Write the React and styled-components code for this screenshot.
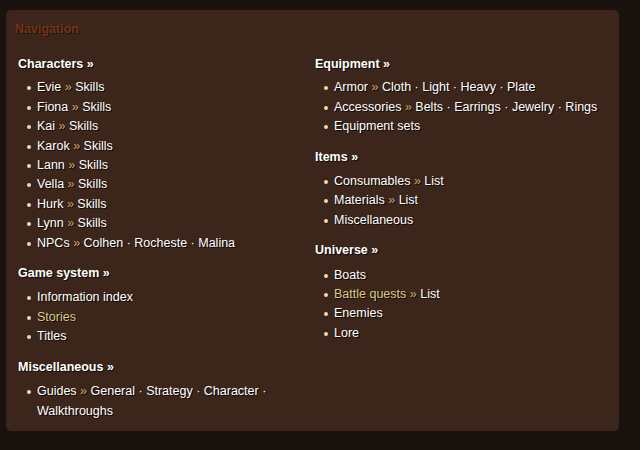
import React from 'react'
import styled, { createGlobalStyle } from 'styled-components'

const Global = createGlobalStyle`
  html, body {
    margin: 0;
    padding: 0;
    background: #1a120e;
    font-family: "Liberation Sans", Arial, sans-serif;
  }
`

const Page = styled.div`
  width: 640px;
  height: 450px;
  padding: 10px 0 0 6px;
  box-sizing: border-box;
`

const Panel = styled.div`
  width: 613px;
  box-sizing: border-box;
  background: #3c251a;
  border-radius: 5px;
  padding: 10px 8px 10px 12px;
`

const Title = styled.div`
  font-size: 12.5px;
  font-weight: bold;
  line-height: 19px;
  color: #74331a;
  text-shadow: 1px 1px 0 #1e120c;
  margin-left: -3px;
  margin-bottom: 16px;
`

const Columns = styled.div`
  display: grid;
  grid-template-columns: 297px 1fr;
`

const Column = styled.div``

const Heading = styled.div`
  font-size: 12.5px;
  font-weight: bold;
  line-height: 19.4px;
  color: #fff;
  text-shadow: 1px 1px 0 #120a06;
  margin-top: ${p => (p.$first ? '0' : '11px')};
  margin-bottom: ${p => (p.$first ? '4px' : '5px')};
`

const List = styled.ul`
  list-style: none;
  margin: 0;
  padding: 0 0 0 19px;
`

const Item = styled.li`
  position: relative;
  font-size: 12.5px;
  line-height: 19.4px;
  color: #fff;
  text-shadow: 1px 1px 0 #120a06;
  &::before {
    content: '';
    position: absolute;
    left: -10px;
    top: 8px;
    width: 4px;
    height: 4px;
    border-radius: 50%;
    background: #ecdcae;
  }
`

const Raquo = styled.span`
  color: ${p => (p.$white ? '#fff' : '#c9ac6c')};
`

const Link = styled.span`
  color: ${p => (p.$gold ? '#d6cb8a' : '#fff')};
`

const Sep = () => <span> · </span>

const Line = ({ main, gold, subs }) => (
  <Item>
    <Link $gold={gold}>{main}</Link>
    {subs && (
      <>
        {' '}
        <Raquo>»</Raquo>{' '}
        {subs.map((s, i) => (
          <React.Fragment key={i}>
            {i > 0 && <Sep />}
            <Link>{s}</Link>
          </React.Fragment>
        ))}
      </>
    )}
  </Item>
)

const Head = ({ children, first }) => (
  <Heading $first={first}>
    {children} <Raquo $white>»</Raquo>
  </Heading>
)

export default function App() {
  return (
    <>
      <Global />
      <Page>
        <Panel>
          <Title>Navigation</Title>
          <Columns>
            <Column>
              <Head first>Characters</Head>
              <List>
                <Line main="Evie" subs={['Skills']} />
                <Line main="Fiona" subs={['Skills']} />
                <Line main="Kai" subs={['Skills']} />
                <Line main="Karok" subs={['Skills']} />
                <Line main="Lann" subs={['Skills']} />
                <Line main="Vella" subs={['Skills']} />
                <Line main="Hurk" subs={['Skills']} />
                <Line main="Lynn" subs={['Skills']} />
                <Line main="NPCs" subs={['Colhen', 'Rocheste', 'Malina']} />
              </List>
              <Head>Game system</Head>
              <List>
                <Line main="Information index" />
                <Line main="Stories" gold />
                <Line main="Titles" />
              </List>
              <Head>Miscellaneous</Head>
              <List>
                <Line main="Guides" subs={['General', 'Strategy', 'Character', 'Walkthroughs']} />
              </List>
            </Column>
            <Column>
              <Head first>Equipment</Head>
              <List>
                <Line main="Armor" subs={['Cloth', 'Light', 'Heavy', 'Plate']} />
                <Line main="Accessories" subs={['Belts', 'Earrings', 'Jewelry', 'Rings']} />
                <Line main="Equipment sets" />
              </List>
              <Head>Items</Head>
              <List>
                <Line main="Consumables" subs={['List']} />
                <Line main="Materials" subs={['List']} />
                <Line main="Miscellaneous" />
              </List>
              <Head>Universe</Head>
              <List>
                <Line main="Boats" />
                <Line main="Battle quests" gold subs={['List']} />
                <Line main="Enemies" />
                <Line main="Lore" />
              </List>
            </Column>
          </Columns>
        </Panel>
      </Page>
    </>
  )
}
